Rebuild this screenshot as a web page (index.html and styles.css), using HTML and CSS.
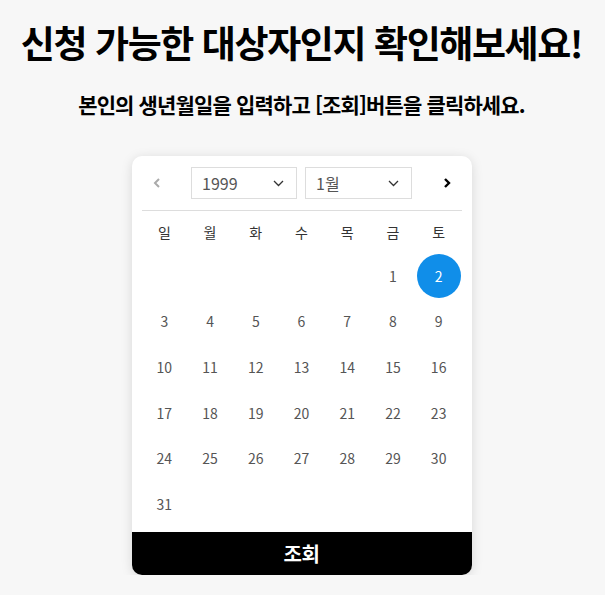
FILE: index.html
```html
<!DOCTYPE html>
<html lang="ko">
<head>
<meta charset="utf-8">
<title>신청 가능한 대상자인지 확인해보세요!</title>
<link rel="stylesheet" href="styles.css">
</head>
<body>
<main class="page">
  <h1 class="title">신청 가능한 대상자인지 확인해보세요!</h1>
  <p class="subtitle">본인의 생년월일을 입력하고 [조회]버튼을 클릭하세요.</p>

  <section class="card">
    <div class="cal-header">
      <button class="nav prev" aria-label="이전 달">
        <svg width="8" height="10" viewBox="0 0 8 10"><path d="M6 1 L2 5 L6 9" fill="none" stroke="#aaa" stroke-width="2"/></svg>
      </button>
      <div class="selects">
        <div class="select year"><span>1999</span>
          <svg width="11" height="7" viewBox="0 0 11 7"><path d="M1 1 L5.5 5.5 L10 1" fill="none" stroke="#333" stroke-width="1.3"/></svg>
        </div>
        <div class="select month"><span>1월</span>
          <svg width="11" height="7" viewBox="0 0 11 7"><path d="M1 1 L5.5 5.5 L10 1" fill="none" stroke="#333" stroke-width="1.3"/></svg>
        </div>
      </div>
      <button class="nav next" aria-label="다음 달">
        <svg width="8" height="10" viewBox="0 0 8 10"><path d="M2 1 L6 5 L2 9" fill="none" stroke="#000" stroke-width="2.4"/></svg>
      </button>
    </div>
    <div class="divider"></div>
    <div class="grid weekdays">
      <span>일</span><span>월</span><span>화</span><span>수</span><span>목</span><span>금</span><span>토</span>
    </div>
    <div class="grid days">
      <span></span><span></span><span></span><span></span><span></span><span class="day">1</span><span class="day selected"><b>2</b></span>
      <span class="day">3</span><span class="day">4</span><span class="day">5</span><span class="day">6</span><span class="day">7</span><span class="day">8</span><span class="day">9</span>
      <span class="day">10</span><span class="day">11</span><span class="day">12</span><span class="day">13</span><span class="day">14</span><span class="day">15</span><span class="day">16</span>
      <span class="day">17</span><span class="day">18</span><span class="day">19</span><span class="day">20</span><span class="day">21</span><span class="day">22</span><span class="day">23</span>
      <span class="day">24</span><span class="day">25</span><span class="day">26</span><span class="day">27</span><span class="day">28</span><span class="day">29</span><span class="day">30</span>
      <span class="day">31</span>
    </div>
    <button class="submit">조회</button>
  </section>
</main>
</body>
</html>
```

FILE: styles.css
```css
* { box-sizing: border-box; }
html, body {
  margin: 0;
  padding: 0;
  background: #f7f7f7;
}
body {
  font-family: "Noto Sans CJK KR", "Noto Sans", sans-serif;
  color: #000;
}
.page {
  display: flex;
  flex-direction: column;
  align-items: center;
  padding: 19px 2px 0 0;
}
.title {
  margin: 0;
  font-size: 37px;
  line-height: 46px;
  font-weight: 700;
  letter-spacing: -1.4px;
  white-space: nowrap;
}
.subtitle {
  margin: 25px 0 0;
  font-size: 21px;
  line-height: 28px;
  font-weight: 700;
  letter-spacing: -0.85px;
  white-space: nowrap;
}
.card {
  margin-top: 38px;
  width: 340px;
  background: #fff;
  border-radius: 10px;
  box-shadow: 0 2px 12px rgba(0,0,0,0.13);
  overflow: hidden;
  display: flex;
  flex-direction: column;
}
.cal-header {
  display: flex;
  justify-content: space-between;
  align-items: flex-start;
  padding: 11px 10px 0;
  height: 54px;
}
.nav {
  width: 30px;
  height: 32px;
  border: 0;
  background: transparent;
  padding: 0;
  display: flex;
  align-items: center;
  justify-content: center;
}
.selects {
  display: flex;
  gap: 8px;
}
.select {
  height: 32px;
  border: 1px solid #ddd;
  display: flex;
  align-items: center;
  justify-content: space-between;
  padding: 0 12px 0 10px;
  font-size: 16px;
  color: #555;
}
.select.year { width: 106px; }
.select.month { width: 107px; }
.divider {
  margin: 0 10px;
  height: 1px;
  background: #ddd;
}
.grid {
  display: grid;
  grid-template-columns: repeat(7, 1fr);
  padding: 0 10px;
}
.weekdays span {
  height: 42px;
  display: flex;
  align-items: center;
  justify-content: center;
  font-size: 14px;
  color: #333;
}
.days span {
  height: 45.6px;
  display: flex;
  align-items: center;
  justify-content: center;
  font-size: 14px;
  color: #555;
}
.days .selected b {
  width: 44px;
  height: 44px;
  border-radius: 50%;
  background: #108ee9;
  color: #fff;
  font-weight: 400;
  display: flex;
  align-items: center;
  justify-content: center;
}
.submit {
  margin-top: 5px;
  height: 43px;
  border: 0;
  background: #000;
  color: #fff;
  font-family: inherit;
  font-size: 20px;
  font-weight: 700;
  letter-spacing: -0.5px;
  padding: 0;
}
```
